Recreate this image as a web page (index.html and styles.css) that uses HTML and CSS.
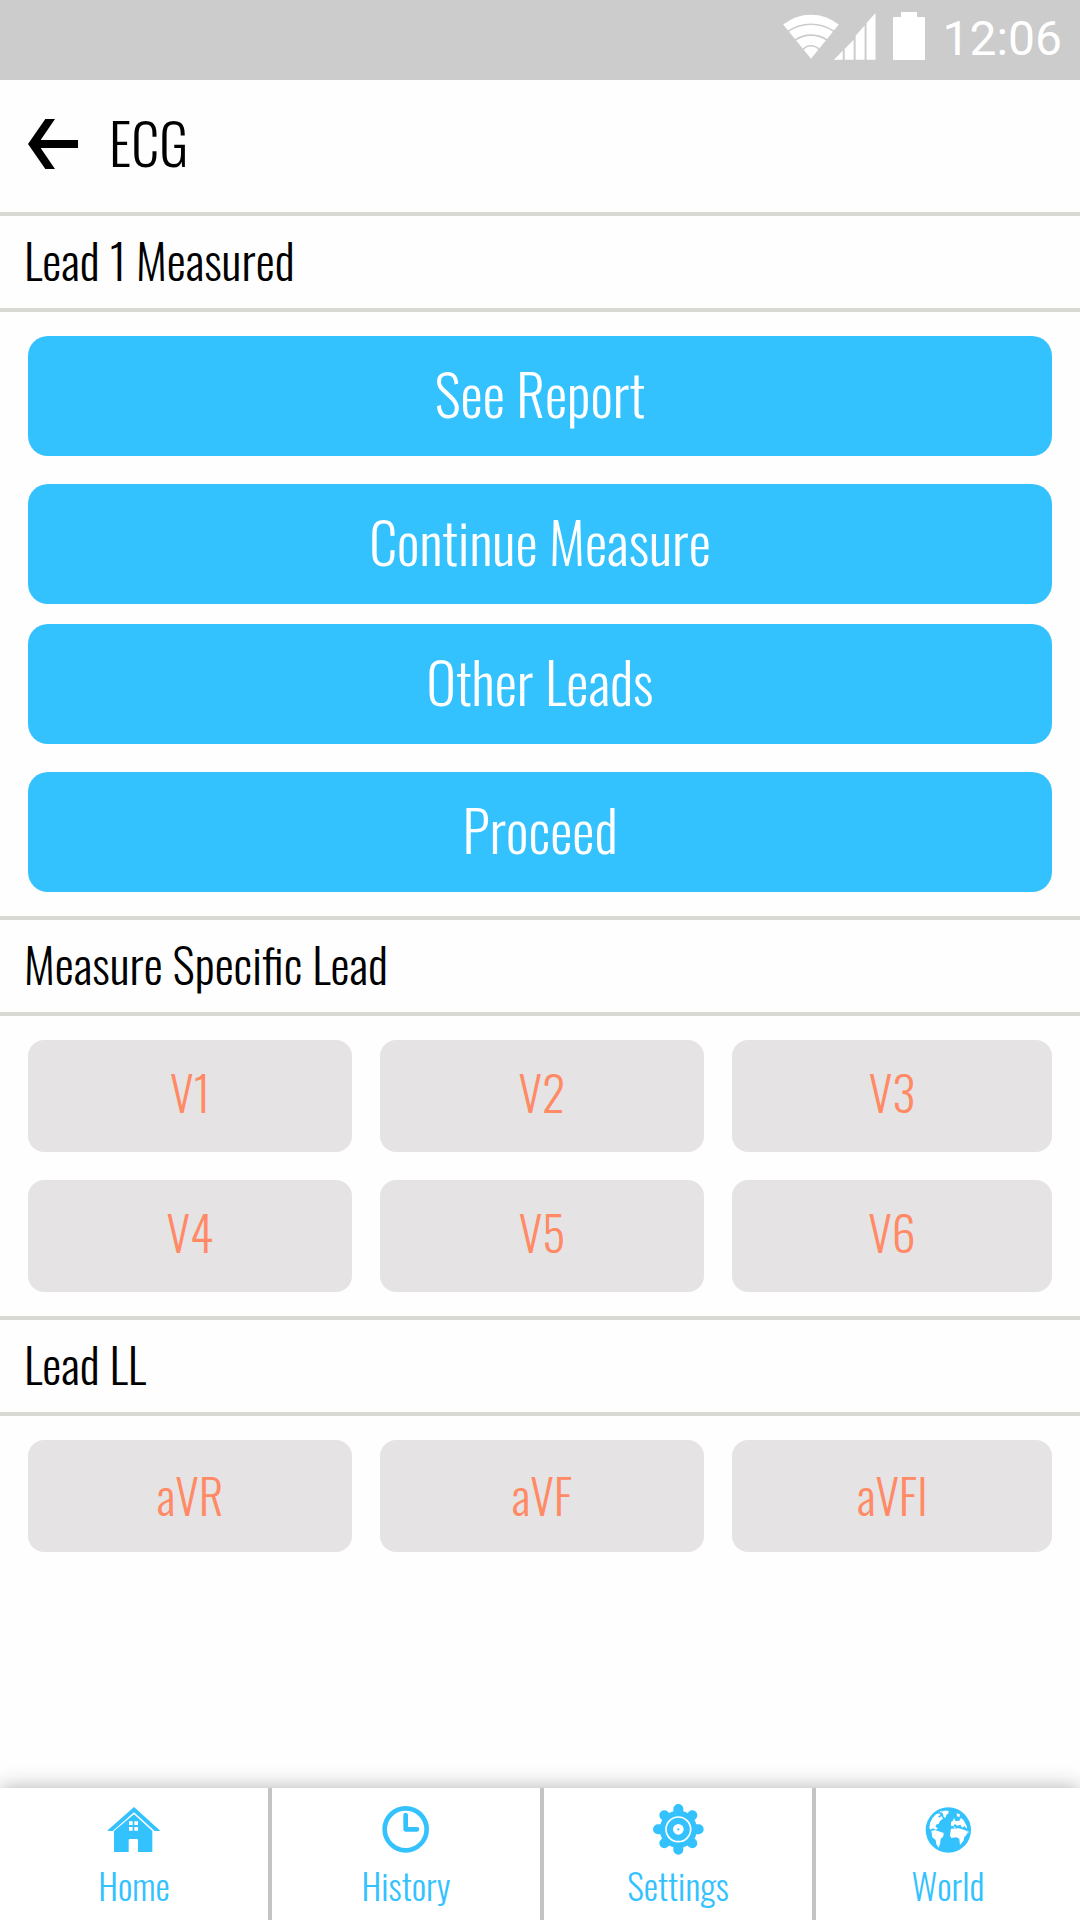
FILE: index.html
```html
<!DOCTYPE html>
<html lang="en">
<head>
<meta charset="utf-8">
<meta name="viewport" content="width=device-width, initial-scale=1">
<title>ECG</title>
<link rel="stylesheet" href="styles.css">
</head>
<body>
<div class="app">
  <div class="status-bar">
    <svg class="status-signal" viewBox="69 36 280 145" aria-hidden="true">
      <path d="M69 74Q106 44 153 44Q200 44 237 74L153 177Z" fill="#fff"/>
      <path d="M84 94Q115 73 153 73Q191 73 222 94M105 121Q127 106 153 106Q180 106 202 121M129 149Q139 138 153 138Q167 138 178 149" fill="none" stroke="#ccc" stroke-width="5"/>
      <path d="M222 180L249 153V180ZM255 180V147L282 120V180ZM288 180V108L315 77V180ZM321 180V69L348 39V180Z" fill="#fff"/>
    </svg>
    <svg class="status-battery" viewBox="0 0 32 48" aria-hidden="true">
      <path d="M8 0H24V5H31Q32 5 32 6V47Q32 48 31 48H1Q0 48 0 47V6Q0 5 1 5H8Z" fill="#fff"/>
    </svg>
    <time class="clock">12:06</time>
  </div>

  <header class="header">
    <button class="back" type="button" aria-label="Back">
      <svg viewBox="0 0 150 150" aria-hidden="true"><path d="M52 0H81L38 63H150V87H38L81 150H52L0 75Z"/></svg>
    </button>
    <h1 class="title">ECG</h1>
  </header>

  <main class="content">
    <section>
      <h2 class="section-title">Lead 1 Measured</h2>
      <div class="actions">
        <div class="action-pair">
          <button class="action" type="button">See Report</button>
          <button class="action" type="button">Continue Measure</button>
        </div>
        <div class="action-pair">
          <button class="action" type="button">Other Leads</button>
          <button class="action" type="button">Proceed</button>
        </div>
      </div>
    </section>
    <section>
      <h2 class="section-title">Measure Specific Lead</h2>
      <div class="leads leads-chest">
        <button class="lead" type="button">V1</button>
        <button class="lead" type="button">V2</button>
        <button class="lead" type="button">V3</button>
        <button class="lead" type="button">V4</button>
        <button class="lead" type="button">V5</button>
        <button class="lead" type="button">V6</button>
      </div>
    </section>
    <section>
      <h2 class="section-title">Lead LL</h2>
      <div class="leads">
        <button class="lead" type="button">aVR</button>
        <button class="lead" type="button">aVF</button>
        <button class="lead" type="button">aVFl</button>
      </div>
    </section>
  </main>

  <nav class="nav">
    <a class="nav-item" href="#home">
      <svg class="nav-icon" viewBox="48 66 168 168" aria-hidden="true">
        <path d="M132 81L209 151V153H194L132 97L68 153H53V151Z"/>
        <path d="M132 103L187 153V216H144V181Q144 177 140 177H120Q116 177 116 181V216H72V153Z"/>
        <path fill="#fff" d="M117 124H128V135H117ZM133 124H144V135H133ZM117 141H128V152H117ZM133 141H144V152H133Z"/>
      </svg>
      <span>Home</span>
    </a>
    <a class="nav-item" href="#history">
      <svg class="nav-icon" viewBox="54 66 168 168" aria-hidden="true">
        <circle cx="137" cy="148" r="63" fill="none" stroke="currentColor" stroke-width="14"/>
        <path d="M137 105V148H171" fill="none" stroke="currentColor" stroke-width="14" stroke-linecap="round" stroke-linejoin="round"/>
      </svg>
      <span>History</span>
    </a>
    <a class="nav-item" href="#settings">
      <svg class="nav-icon" viewBox="60 66 168 168" aria-hidden="true">
        <circle cx="145" cy="148" r="56"/>
        <g stroke="currentColor" stroke-width="30" stroke-linecap="round">
          <path d="M145 87V209M84 148H206M103 106L187 190M103 190L187 106"/>
        </g>
        <circle cx="145" cy="148" r="37" fill="none" stroke="#fff" stroke-width="5"/>
        <circle cx="145" cy="148" r="16" fill="#fff"/>
        <path d="M145 144L149 148L145 152L141 148Z"/>
      </svg>
      <span>Settings</span>
    </a>
    <a class="nav-item" href="#world">
      <svg class="nav-icon" viewBox="60 66 168 168" aria-hidden="true">
        <circle cx="145" cy="150" r="68"/>
        <g fill="#fff">
          <path d="M88 144L90 130L97 115L108 103L118 100L122 105L114 109L119 113L124 108L129 116L120 123L116 131L108 134L107 141L114 145L108 149L99 145L92 149Z"/>
          <path d="M94 153L104 150L116 154L131 159L130 169L122 177L120 191L116 203L109 193L107 180L97 172Z"/>
          <path d="M124 96L132 92H145L146 99L139 105L136 114L131 111L129 102Z"/>
          <path d="M119 94L126 92L123 98Z"/>
          <path d="M170 100L180 103L178 112L171 109Z"/>
          <path d="M153 137V127L160 121L162 113L167 124L178 122L183 113L192 122L201 140L200 147L194 138L187 143L181 134L172 137L164 132L160 139Z"/>
          <path d="M153 146L176 145L196 151L202 155L199 166L193 171L190 183L180 195L178 176L169 172L154 174L150 167L152 152Z"/>
          <path d="M160 140L168 141L164 144ZM203 149L206 157L202 162Z"/>
        </g>
      </svg>
      <span>World</span>
    </a>
  </nav>
</div>
</body>
</html>
```
FILE: styles.css
```css
* {
  box-sizing: border-box;
}

body {
  margin: 0;
  background: #fefefe;
  color: #000;
  font-family: Oswald, "Roboto Condensed", "Liberation Sans Narrow", "Liberation Sans", sans-serif;
  font-weight: 300;
  font-kerning: none;
  font-variant-numeric: tabular-nums;
}

button {
  margin: 0;
  padding: 0;
  border: 0;
  font: inherit;
  font-kerning: none;
  font-variant-numeric: tabular-nums;
  cursor: pointer;
}

svg {
  display: block;
  fill: currentColor;
}

.app {
  display: flex;
  flex-direction: column;
  min-height: 100vh;
}

.status-bar {
  display: flex;
  align-items: flex-start;
  justify-content: flex-end;
  gap: 17px;
  height: 80px;
  padding: 12px 18px 0;
  background: #ccc;
  color: #fff;
}

.status-signal {
  width: 93px;
  height: 48px;
}

.status-battery {
  width: 32px;
  height: 48px;
}

.clock {
  font: 400 48px/54px Roboto, sans-serif;
}

.header {
  display: flex;
  align-items: center;
  gap: 31px;
  height: 132px;
  padding: 0 28px 4px;
}

.back {
  width: 50px;
  height: 50px;
  background: none;
  color: #000;
}

.title {
  margin: 0;
  padding-bottom: 4px;
  font-size: 56px;
  font-weight: 300;
  line-height: 64px;
}

.content {
  flex: 1;
}

.section-title {
  margin: 0;
  padding: 0 24px 4px;
  border: solid #d8d9d3;
  border-width: 4px 0;
  font-size: 48px;
  font-weight: 300;
  line-height: 88px;
}

.actions {
  display: grid;
  gap: 20px;
  padding: 24px 28px;
}

.action-pair {
  display: grid;
  gap: 28px;
}

.action {
  height: 120px;
  padding-bottom: 8px;
  border-radius: 20px;
  background: #34c2ff;
  color: #fff;
  font-size: 56px;
}

.leads {
  display: grid;
  grid-template-columns: 81fr 81fr 80fr;
  gap: 28px;
  padding: 24px 28px;
}

.lead {
  height: 112px;
  padding-bottom: 4px;
  border-radius: 16px;
  background: #e5e3e4;
  color: #ff8a65;
  font-size: 48px;
}

.leads-chest .lead {
  padding-bottom: 10px;
}

.nav {
  display: grid;
  grid-template-columns: 67fr 67fr 67fr 66fr;
  gap: 4px;
  background: #c4c4c4;
  box-shadow: 0 0 20px rgba(0, 0, 0, 0.3);
}

.nav-item {
  display: flex;
  flex-direction: column;
  align-items: center;
  gap: 5px;
  height: 132px;
  padding-top: 14px;
  background: #fff;
  color: #34c2ff;
  font-size: 36px;
  line-height: 44px;
  text-decoration: none;
}

.nav-icon {
  width: 56px;
  height: 56px;
}
```
